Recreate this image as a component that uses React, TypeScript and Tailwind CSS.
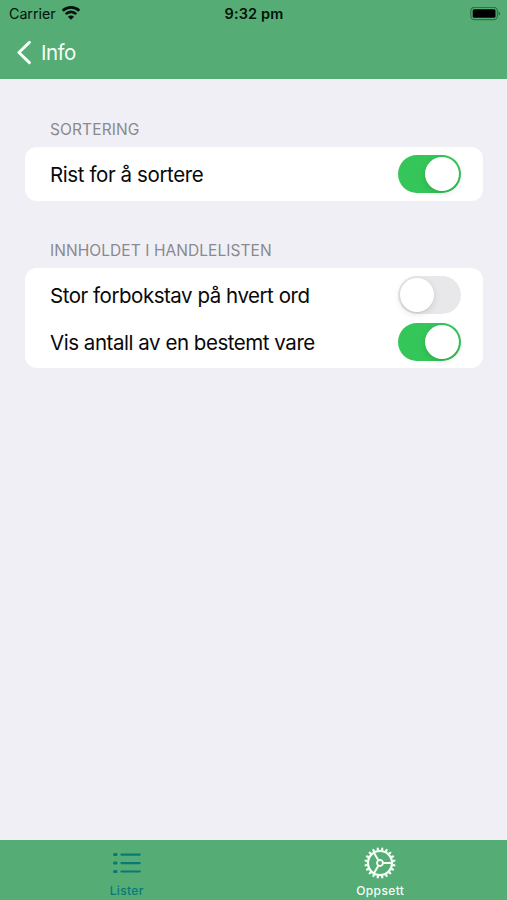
import React from "react";

function Wifi() {
  return (
    <svg className="ml-[5px] h-[15px] w-[20px]" viewBox="0 0 20 15" fill="none" stroke="#03120a" strokeWidth="2.7">
      <path d="M1.7 4.7a12 12 0 0 1 16.6 0" />
      <path d="M4.8 8.1a7.4 7.4 0 0 1 10.4 0" />
      <path d="M10 13.8 6.9 10.7a4.4 4.4 0 0 1 6.2 0Z" fill="#03120a" stroke="none" />
    </svg>
  );
}

function Battery() {
  return (
    <svg className="h-[14px] w-[31px]" viewBox="0 0 31 14">
      <rect x="0.8" y="0.3" width="26.6" height="12.4" rx="3.6" fill="none" stroke="#34704b" strokeWidth="1.2" />
      <rect x="2.7" y="2.2" width="22.8" height="8.6" rx="1.5" fill="#000" />
      <path d="M28.6 4.2q3.2 2.3 0 4.6Z" fill="#34704b" />
    </svg>
  );
}

function Toggle({ on }: { on: boolean }) {
  return (
    <span
      role="switch"
      aria-checked={on}
      className={
        on
          ? "flex h-[38px] w-[63px] items-center justify-end rounded-full bg-[#34c659] p-[2px]"
          : "flex h-[38px] w-[63px] items-center justify-start rounded-full bg-[#e8e8ea] p-[2px]"
      }
    >
      <span className="size-[34px] rounded-full bg-white shadow-[0_2px_7px_rgba(0,0,0,0.12),0_1px_1px_rgba(0,0,0,0.06)]" />
    </span>
  );
}

function Row({ label, on, className, spacing }: { label: string; on: boolean; className: string; spacing: string }) {
  return (
    <div className={"flex items-center justify-between pl-[25px] pr-[22px] " + className}>
      <span className={"whitespace-nowrap pt-[2px] text-[20.5px] leading-6 text-[#080808] " + spacing}>{label}</span>
      <Toggle on={on} />
    </div>
  );
}

function Gear() {
  const teeth = Array.from({ length: 20 }, (_, i) => i * 18 + 9);
  return (
    <svg className="h-[32px] w-[32px]" viewBox="-16 -16 32 32" fill="none" stroke="#f5fff7">
      <circle r="12" strokeWidth="2.2" />
      {teeth.map((a) => (
        <path key={a} d="M-1.4 -12.6 -0.8 -15.6H0.8L1.4 -12.6Z" fill="#f5fff7" stroke="none" transform={`rotate(${a})`} />
      ))}
      <circle r="3" strokeWidth="1.9" />
      <path d="M3.5 0H12M-1.8 -3-6.2 -10.4M-1.8 3-6.2 10.4" strokeWidth="2" />
    </svg>
  );
}

function ListIcon() {
  return (
    <svg className="h-[32px] w-[32px]" viewBox="0 0 32 32" stroke="#087878" strokeLinecap="round" fill="none">
      <path d="M10.4 8.6H28.8M10.4 17.1H28.8M10.4 25.5H28.8" strokeWidth="2.1" />
      <path d="M3.5 8.6H5.1M3.5 17.1H5.1M3.5 25.5H5.1" strokeWidth="3" />
    </svg>
  );
}

export default function App() {
  return (
    <div className="flex h-[900px] w-[507px] flex-col overflow-hidden bg-[#f0eff5] font-['Inter','Liberation_Sans',sans-serif]">
      <header className="h-[79px] shrink-0 bg-[#55ac74]">
        <div className="grid h-[27px] grid-cols-3 items-center pl-[7px] pr-[6px] text-[#03120a]">
          <div className="flex items-center pl-[2px]">
            <span className="text-[14.3px] leading-5 tracking-[-0.05px]">Carrier</span>
            <Wifi />
          </div>
          <span className="text-center text-[14.5px] font-semibold leading-5 tracking-[0.12px]">9:32 pm</span>
          <div className="flex justify-end">
            <Battery />
          </div>
        </div>
        <div className="flex h-[50px] items-center pl-[16px] text-[#f4fff6]">
          <svg className="h-[25px] w-[16px]" viewBox="0 0 16 25" fill="none" stroke="currentColor" strokeWidth="3" strokeLinecap="round" strokeLinejoin="round">
            <path d="M13.4 2.3 2.9 12.5 13.4 22.7" />
          </svg>
          <span className="ml-[9px] pt-[2px] text-[20.5px] leading-6 tracking-[-0.55px]">Info</span>
        </div>
      </header>

      <main className="flex-1 pl-[25px] pr-[24px] pt-[41px]">
        <h2 className="pl-[25px] text-[15.5px] leading-5 tracking-[0.11px] text-[#89898e]">SORTERING</h2>
        <section className="mt-[7px] rounded-[12px] bg-white">
          <Row label="Rist for å sortere" on className="h-[54px]" spacing="tracking-[-0.4px]" />
        </section>
        <h2 className="mt-[40px] pl-[25px] text-[15.5px] leading-5 tracking-[0.07px] text-[#89898e]">INNHOLDET I HANDLELISTEN</h2>
        <section className="mt-[7px] rounded-[12px] bg-white py-[3px]">
          <Row label="Stor forbokstav på hvert ord" on={false} className="h-[47px]" spacing="tracking-[-0.47px]" />
          <Row label="Vis antall av en bestemt vare" on className="h-[47px]" spacing="tracking-[-0.46px]" />
        </section>
      </main>

      <nav className="grid h-[60px] shrink-0 grid-cols-2 bg-[#55ac74]">
        <div className="flex flex-col items-center pt-[6px] text-[#087878]">
          <ListIcon />
          <span className="mt-[5px] text-[12px] font-medium leading-4 tracking-[0.35px]">Lister</span>
        </div>
        <div className="flex flex-col items-center pt-[7px] text-[#f5fff7]">
          <Gear />
          <span className="mt-[4px] text-[12px] font-medium leading-4 tracking-[0.4px]">Oppsett</span>
        </div>
      </nav>
    </div>
  );
}
